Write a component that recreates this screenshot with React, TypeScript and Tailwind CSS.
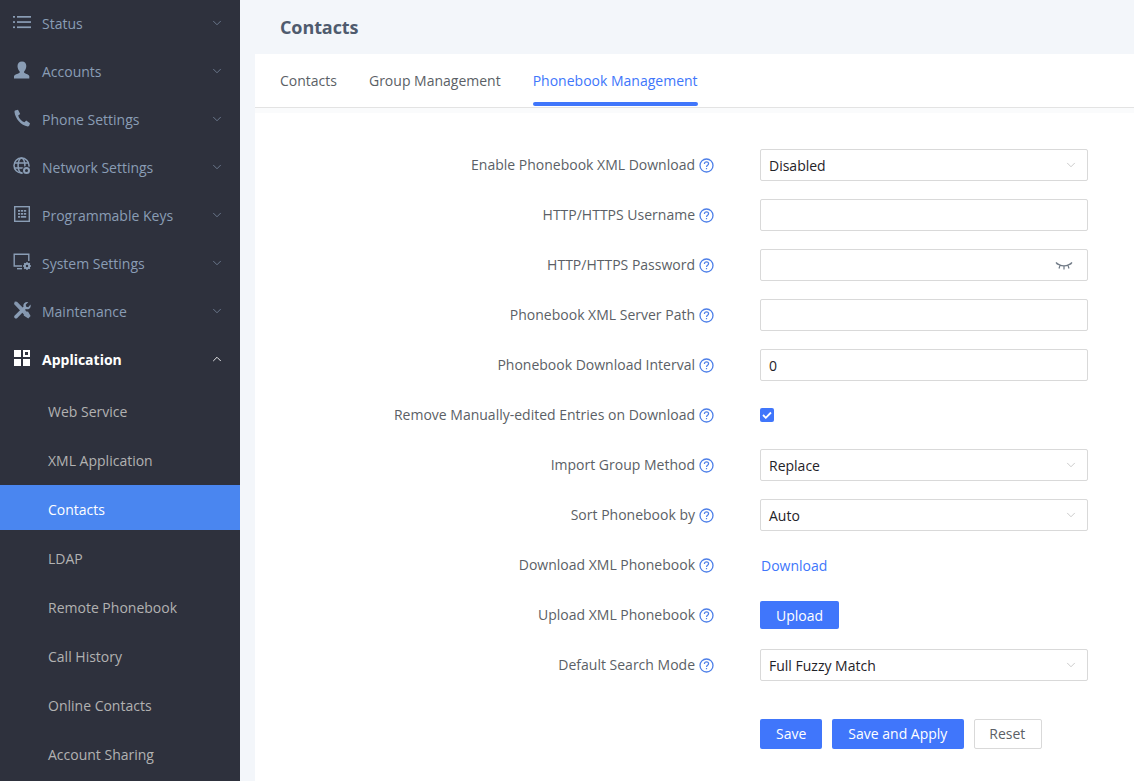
import React from "react";
import { ChevronDown, ChevronUp } from "lucide-react";

const Ic = ({ children, vb = "0 0 18 18" }: { children: React.ReactNode; vb?: string }) => (
  <svg width="18" height="18" viewBox={vb} className="shrink-0">{children}</svg>
);

const c = "#8a9db5";
const ListI = () => (
  <Ic><g fill={c}><rect x="0" y="3" width="2" height="1.700" /><rect x="0" y="8.200" width="2" height="1.700" /><rect x="0" y="13.400" width="2" height="1.700" /><rect x="4" y="3" width="14" height="1.700" /><rect x="4" y="8.200" width="14" height="1.700" /><rect x="4" y="13.400" width="14" height="1.700" /></g></Ic>
);
const UserI = () => (
  <Ic><path fill={c} d="M9 0.500c2.800 0 4.300 2 4.300 4.600 0 2.200-.9 4-2 5.100-.4.500-.3 1.400.3 1.800 1.700.9 4 1.500 4.700 3v2.500H1v-2.500c.7-1.500 3.500-2.100 5.200-3 .6-.4.7-1.300.3-1.800-1.100-1.100-2-2.900-2-5.100C4.500 2.500 6.200.5 9 .5z" /></Ic>
);
const PhoneI = () => (
  <Ic><path fill={c} d="M2 1.500 5 .7l2.200 4.200-2 1.500c.7 2.900 3.300 5.700 6.200 6.800l1.800-1.700 3.800 2.700-.7 2.400c-.2.600-.8.900-1.500.8C8 16.500 2.200 9.500 1.500 3c0-.7.100-1.200.5-1.500z" /></Ic>
);
const NetI = () => (
  <Ic>
    <g fill="none" stroke={c} strokeWidth="1.500"><circle cx="8.500" cy="8.500" r="7.500" /><ellipse cx="8.500" cy="8.500" rx="3.400" ry="7.500" /><path d="M1 6h15M1 11h15" /></g>
    <circle cx="13.500" cy="13.500" r="4.500" fill="#2e313d" />
    <circle cx="13.500" cy="13.500" r="2.500" fill="none" stroke={c} strokeWidth="2" />
  </Ic>
);
const KeysI = () => (
  <Ic>
    <rect x="1.700" y="1.700" width="14.600" height="14.600" fill="none" stroke={c} strokeWidth="1.400" />
    <g fill={c}><rect x="5" y="5" width="2.200" height="1.700" /><rect x="8" y="5" width="2.200" height="1.700" /><rect x="11" y="5" width="2.200" height="1.700" /><rect x="5" y="8" width="2.200" height="1.700" /><rect x="8" y="8" width="2.200" height="1.700" /><rect x="11" y="8" width="2.200" height="1.700" /><rect x="5" y="11" width="2.200" height="1.700" /><rect x="8" y="11" width="5.200" height="1.700" /></g>
  </Ic>
);
const SysI = () => (
  <Ic>
    <path d="M9 13H1.200V1.200h14.600V8" fill="none" stroke={c} strokeWidth="1.400" />
    <rect x="4" y="15" width="5" height="1.400" fill={c} />
    <circle cx="14" cy="13" r="2.200" fill="none" stroke={c} strokeWidth="2" />
    <path d="M14 9v1.500M14 15.500V17M10 13h1.500M16.500 13H18M11.200 10.200l1 1M15.800 14.800l1 1M11.200 15.800l1-1M15.800 11.200l1-1" stroke={c} strokeWidth="1.300" />
  </Ic>
);
const ToolsI = () => (
  <Ic>
    <path fill={c} d="M1.800.6 4 .8l9.800 9.900 1.200-.2 2.600 4.600-2.300 2.300-4.600-2.800.2-1.100L1 3z" opacity="0.95" />
    <path fill={c} d="M17.500 3.400c.5 1.800 0 3.300-1.300 4.300-1 .7-2.200.8-3.300.4L4.300 17c-.8.700-1.900.7-2.600 0-.7-.7-.7-1.800 0-2.500L10.500 5.700c-.4-1.300-.1-2.500.8-3.500C12.400 1 13.900.6 15.300 1.100l-2.600 2.600.5 2 2 .6z" />
  </Ic>
);
const AppI = () => (
  <Ic>
    <g fill="#fff"><rect x="1" y="1" width="7" height="7" /><rect x="1" y="10" width="7" height="7" /><rect x="10" y="10" width="7" height="7" /></g>
    <rect x="11" y="2" width="5" height="5" fill="none" stroke="#fff" strokeWidth="2" />
  </Ic>
);

const menu: [string, React.ReactNode][] = [
  ["Status", <ListI />],
  ["Accounts", <UserI />],
  ["Phone Settings", <PhoneI />],
  ["Network Settings", <NetI />],
  ["Programmable Keys", <KeysI />],
  ["System Settings", <SysI />],
  ["Maintenance", <ToolsI />],
];
const subs = ["Web Service", "XML Application", "Contacts", "LDAP", "Remote Phonebook", "Call History", "Online Contacts", "Account Sharing"];

const Help = () => (
  <svg width="15" height="15" viewBox="0 0 15 15" className="shrink-0">
    <circle cx="7.500" cy="7.500" r="6.500" fill="none" stroke="#4d7fe8" strokeWidth="1.300" />
    <path d="M5.400 5.900c0-1.300 1-2 2.100-2s2.100.7 2.100 1.900c0 1.400-2.100 1.500-2.100 3.100" fill="none" stroke="#4d7fe8" strokeWidth="1.200" />
    <rect x="6.900" y="10" width="1.200" height="1.200" fill="#4d7fe8" />
  </svg>
);

const box = "h-8 w-[328px] rounded-[2px] border border-[#d9d9d9] bg-white flex items-center justify-between pl-2 text-[14px] text-[#1f2329]";
const Select = ({ v }: { v: string }) => (
  <div className={box + " pr-[9px]"}>
    <span>{v}</span>
    <ChevronDown size={14} strokeWidth={1.200} color="#b5b5b5" />
  </div>
);
const Input = ({ v = "", eye = false }: { v?: string; eye?: boolean }) => (
  <div className={box + " pr-3"}>
    <span>{v}</span>
    {eye && (
      <svg width="18" height="10" viewBox="0 0 18 10" className="mr-[2px] mt-[1px]">
        <path d="M1 1.500c4 4.400 12 4.400 16 0M1 1.500l1.500 2M17 1.500l-1.500 2M5 4.500 4 7.500M9 5.500v3M13 4.500l1 3" fill="none" stroke="#6f7985" strokeWidth="1.200" />
      </svg>
    )}
  </div>
);
const btn = "rounded-[2px] bg-[#4076fb] text-white text-[14px] px-4 flex items-center";

const rows: [string, React.ReactNode][] = [
  ["Enable Phonebook XML Download", <Select v="Disabled" />],
  ["HTTP/HTTPS Username", <Input />],
  ["HTTP/HTTPS Password", <Input eye />],
  ["Phonebook XML Server Path", <Input />],
  ["Phonebook Download Interval", <Input v="0" />],
  [
    "Remove Manually-edited Entries on Download",
    <div className="w-[14px] h-[14px] rounded-[2px] bg-[#4076fb] flex items-center justify-center">
      <svg width="10" height="8" viewBox="0 0 10 8"><path d="M1 4l2.800 2.800L9 1.500" fill="none" stroke="#fff" strokeWidth="1.800" /></svg>
    </div>,
  ],
  ["Import Group Method", <Select v="Replace" />],
  ["Sort Phonebook by", <Select v="Auto" />],
  ["Download XML Phonebook", <span className="text-[14px] text-[#4076fb] pl-px">Download</span>],
  ["Upload XML Phonebook", <div className={btn + " h-7"}>Upload</div>],
  ["Default Search Mode", <Select v="Full Fuzzy Match" />],
];

export default function App() {
  return (
    <div className="h-[781px] w-full overflow-hidden flex bg-[#f3f6fa] font-['Open_Sans',sans-serif]">
      <aside className="w-[240px] shrink-0 bg-[#2e313d] h-full overflow-hidden">
        <div className="-mt-px">
          {menu.map(([name, icon]) => (
            <div key={name} className="h-12 flex items-center pl-[13px] pr-[16px]">
              <div className="w-[29px] -mt-[2px] flex">{icon}</div>
              <span className="text-[14px] text-[#8a9db5] flex-1">{name}</span>
              <ChevronDown size={14} strokeWidth={1.100} color="#8a9db5" className="-mt-[1px]" />
            </div>
          ))}
          <div className="h-12 flex items-center pl-[13px] pr-[16px]">
            <div className="w-[29px] -mt-[2px] flex"><AppI /></div>
            <span className="text-[14px] font-bold text-white flex-1">Application</span>
            <ChevronUp size={14} strokeWidth={1.500} color="#fff" className="-mt-[1px]" />
          </div>
          <div className="flex flex-col gap-1 pt-[4px]">
            {subs.map((s) => (
              <div
                key={s}
                className={
                  "h-[45px] shrink-0 flex items-center pl-12 pt-[4px] text-[14px] " +
                  (s === "Contacts" ? "bg-[#4a86f0] text-white" : "text-[#b2b2b2]")
                }
              >
                {s}
              </div>
            ))}
          </div>
        </div>
      </aside>
      <main className="flex-1 min-w-0 flex flex-col">
        <div className="h-[54px] shrink-0 flex items-center pl-[40px]">
          <h1 className="text-[18px] font-bold tracking-[-0.1px] text-[#4f5b6e]">Contacts</h1>
        </div>
        <div className="ml-[15px] flex-1 bg-white flex flex-col">
          <div className="h-[54px] shrink-0 border-b border-[#e3e3e3] flex items-stretch pl-[25px] gap-8 text-[14px] text-[#5b5f66]">
            <div className="flex items-center pb-[1px]">Contacts</div>
            <div className="flex items-center pb-[1px]">Group Management</div>
            <div className="relative flex items-center pb-[1px] text-[#4076fb]">
              Phonebook Management
              <div className="absolute left-0 right-0 bottom-px h-1 rounded-[2px] bg-[#4076fb]" />
            </div>
          </div>
          <div className="h-[5px] bg-[#fafbfc] shrink-0" />
          <div className="pt-[36px] flex flex-col gap-[18px]">
            {rows.map(([label, ctl]) => (
              <div key={label} className="h-8 flex items-center">
                <div className="w-[459px] shrink-0 flex items-center justify-end gap-[5px] text-[14px] text-[#5b5f66]">
                  <span className="-mt-[2px] -mr-px">{label}</span>
                  <Help />
                </div>
                <div className="ml-[46px] flex items-center">{ctl}</div>
              </div>
            ))}
          </div>
          <div className="mt-[38px] ml-[505px] flex gap-[10px] h-[30px]">
            <div className={btn + " pb-[2px]"}>Save</div>
            <div className={btn + " pb-[2px] w-[132px]"}>Save and Apply</div>
            <div className="rounded-[2px] bg-white border border-[#d9d9d9] text-[#5b5f66] text-[14px] w-[68px] pl-[14px] pb-[2px] flex items-center">Reset</div>
          </div>
        </div>
      </main>
    </div>
  );
}
